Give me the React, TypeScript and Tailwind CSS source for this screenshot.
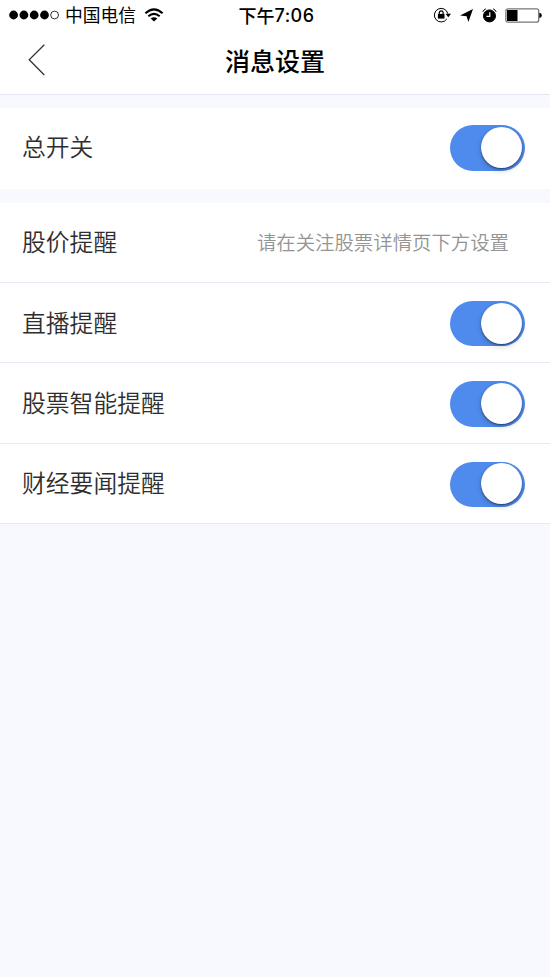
import React from "react";

const rows = ["直播提醒", "股票智能提醒", "财经要闻提醒"];

function Toggle() {
  return (
    <button
      role="switch"
      aria-checked="true"
      className="flex h-[45.5px] w-[75px] shrink-0 items-center justify-end rounded-full bg-[#4f8bed] pr-[2.5px] pb-[1px]"
    >
      <span className="h-[41px] w-[41px] rounded-full bg-white shadow-[0_1px_2px_rgba(0,0,0,0.5),0_3px_6px_rgba(0,0,0,0.15)]" />
    </button>
  );
}

function Label({ children }: { children: React.ReactNode }) {
  return <span className="pb-[4px] text-[23.8px] leading-8 font-[350] whitespace-nowrap text-[#2e2e2e]">{children}</span>;
}

function StatusBar() {
  return (
    <div className="grid h-[30px] grid-cols-[1fr_auto_1fr] items-center text-black">
      <div className="flex items-center pl-[9px]">
        <svg width="51" height="10" viewBox="0 0 51 10">
          <circle cx="4.6" cy="5" r="4.4" />
          <circle cx="14.9" cy="5" r="4.4" />
          <circle cx="25.2" cy="5" r="4.4" />
          <circle cx="35.5" cy="5" r="4.4" />
          <circle cx="45.6" cy="5" r="3.9" fill="none" stroke="black" strokeWidth="0.8" />
        </svg>
        <span className="ml-[5px] pb-[2px] text-[17.8px] leading-6 whitespace-nowrap">中国电信</span>
        <svg className="ml-[8px]" width="20" height="15" viewBox="0 0 20 15" fill="none" stroke="black" strokeWidth="2.1">
          <path d="M1.4 5.2 Q10 -2.6 18.6 5.2" />
          <path d="M4.3 8.3 Q10 3.4 15.7 8.3" />
          <path d="M10 13.5 L6.7 10.5 Q10 8.1 13.3 10.5Z" fill="black" stroke="none" />
        </svg>
      </div>
      <span className="flex pl-[3px] leading-6 font-medium whitespace-nowrap">
        <span className="text-[18px]">下午</span>
        <span className="pt-px font-['Inter'] text-[18px] tracking-[0.5px]">7:06</span>
      </span>
      <div className="flex items-center justify-end pr-[8px]">
        <svg width="18" height="16" viewBox="0 0 18 16" fill="none" stroke="black" strokeWidth="1">
          <path d="M13.8 12 A6.8 6.8 0 1 1 14.8 6.6" />
          <path d="M12.6 6.8 H18 L15.3 10.2Z" fill="black" stroke="none" />
          <rect x="4.9" y="6.9" width="6.6" height="4.7" fill="black" stroke="none" />
          <path d="M6.3 7.2 V5.8 A1.9 1.9 0 0 1 10.1 5.8 V7.2" strokeWidth="1.2" />
        </svg>
        <svg className="ml-[9px]" width="13" height="13" viewBox="0 0 13 13">
          <path d="M13 0 L8.4 13 L6.6 7.2 L0 6.6Z" />
        </svg>
        <svg className="ml-[9px]" width="15" height="15" viewBox="0 0 15 15" fill="none" stroke="black">
          <circle cx="7.5" cy="7.9" r="6" fill="black" />
          <path d="M0.8 3.9 Q1.6 1.7 3.9 0.8 M11.1 0.8 Q13.4 1.7 14.2 3.9" strokeWidth="1" />
          <path d="M7.8 4.2 V8.3 H4.4" stroke="white" strokeWidth="1.2" />
        </svg>
        <svg className="ml-[8px]" width="37" height="15" viewBox="0 0 37 15">
          <rect x="0.9" y="0.8" width="32.8" height="13.4" rx="2" fill="white" stroke="#777" strokeWidth="1.3" />
          <rect x="2" y="2" width="10.5" height="11" />
          <path d="M34.3 4.8 Q36.8 5 36.8 7.4 Q36.8 9.8 34.3 10Z" />
        </svg>
      </div>
    </div>
  );
}

export default function App() {
  return (
    <div className="min-h-[977px] w-[550px] bg-[#f7f9fe] font-['Noto_Sans_CJK_SC',sans-serif]">
      <header className="h-[95px] border-b border-[#e5e6f0] bg-white">
        <StatusBar />
        <div className="grid h-[59px] grid-cols-[1fr_auto_1fr] items-center">
          <button aria-label="返回" className="pl-[28px]">
            <svg width="18" height="32" viewBox="0 0 18 32" fill="none" stroke="#333" strokeWidth="1.3">
              <path d="M16.3 0.8 L1.2 15.8 L16.3 31" />
            </svg>
          </button>
          <h1 className="text-[25px] leading-8 font-medium text-black">消息设置</h1>
        </div>
      </header>
      <section className="mt-[13px] flex h-[81px] items-center justify-between bg-white pr-[25.5px] pb-[1px] pl-[22px]">
        <Label>总开关</Label>
        <Toggle />
      </section>
      <section className="mt-[14px] bg-white">
        <div className="flex h-[80px] items-center justify-between border-b border-[#e6e8f3] pt-[1px] pr-[41px] pl-[22px]">
          <Label>股价提醒</Label>
          <span className="pb-[3px] text-[19.4px] leading-7 font-[350] whitespace-nowrap text-[#949494]">请在关注股票详情页下方设置</span>
        </div>
        {rows.map((name) => (
          <div key={name} className="flex h-[80.4px] items-center justify-between border-b border-[#e6e8f3] pt-[2px] pr-[25.5px] pl-[22px]">
            <Label>{name}</Label>
            <Toggle />
          </div>
        ))}
      </section>
    </div>
  );
}
